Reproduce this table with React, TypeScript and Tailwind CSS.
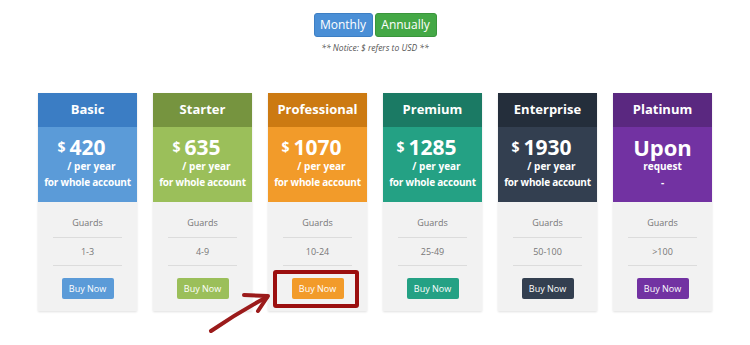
import React from "react";

const plans = [
  { name: "Basic", head: "bg-[#3b7dc4]", body: "bg-[#5b9bd8]", price: "420", range: "1-3" },
  { name: "Starter", head: "bg-[#76943f]", body: "bg-[#9bbf5a]", price: "635", range: "4-9" },
  { name: "Professional", head: "bg-[#cc7a12]", body: "bg-[#f29b2a]", price: "1070", range: "10-24" },
  { name: "Premium", head: "bg-[#1b7a64]", body: "bg-[#24a184]", price: "1285", range: "25-49" },
  { name: "Enterprise", head: "bg-[#242e3b]", body: "bg-[#333f50]", price: "1930", range: "50-100" },
  { name: "Platinum", head: "bg-[#5a2880]", body: "bg-[#7232a2]", price: null, range: ">100" },
];

function Card({ plan }: { plan: (typeof plans)[number] }) {
  return (
    <div className="w-[99px] bg-[#f2f2f2] shadow-[0_1px_2px_rgba(0,0,0,0.12)] flex flex-col">
      <div className={`${plan.head} h-[34px] flex items-center justify-center text-white text-[13px] font-bold`}>
        {plan.name}
      </div>
      <div className={`${plan.body} h-[75px] pt-[8px] flex flex-col items-center text-white font-bold`}>
        {plan.price ? (
          <>
            <div className="h-[25px] flex items-center pr-3 leading-[20px]">
              <span className="text-[14px] mr-[4px]">$</span>
              <span className="text-[21px]">{plan.price}</span>
            </div>
            <div className="text-[10px] leading-[12px] pl-2">/ per year</div>
            <div className="text-[10px] leading-[12px] mt-[4px] tracking-[-0.2px]">for whole account</div>
          </>
        ) : (
          <>
            <div className="h-[25px] flex items-center text-[22px] leading-[20px]">Upon</div>
            <div className="text-[10px] leading-[12px]">request</div>
            <div className="text-[10px] leading-[12px] mt-[4px]">-</div>
          </>
        )}
      </div>
      <div className="pt-[14px] pb-[12px] flex flex-col items-center text-[#777] text-[9px]">
        <div className="w-[69px] leading-[14px] pb-[7px] text-center border-b border-[#dcdcdc]">Guards</div>
        <div className="w-[69px] leading-[14px] pt-[7px] pb-[6px] text-center border-b border-[#dcdcdc]">{plan.range}</div>
        <button className={`${plan.body} mt-[12px] w-[52px] h-[21px] rounded-[2px] text-white text-[9px] flex items-center justify-center`}>
          Buy Now
        </button>
      </div>
    </div>
  );
}

export default function App() {
  return (
    <div className="relative w-[750px] h-[345px] bg-white overflow-hidden" style={{ fontFamily: '"Open Sans", "Liberation Sans", sans-serif' }}>
      <div className="pt-[13px] flex justify-center gap-[2px]">
        <button className="w-[59px] h-[24px] rounded-[3px] bg-[#4a8fd6] border border-[#3d7fc4] text-white text-[12px]">Monthly</button>
        <button className="w-[62px] h-[24px] rounded-[3px] bg-[#44a846] border border-[#3a953c] text-white text-[12px]">Annually</button>
      </div>
      <div className="mt-[5px] text-center text-[8.5px] italic text-[#555]">** Notice: $ refers to USD **</div>

      <div className="mt-[38px] flex justify-center gap-[16px]">
        {plans.map((p) => (
          <Card key={p.name} plan={p} />
        ))}
      </div>

      {/* highlight annotation */}
      <div className="absolute left-[273px] top-[270px] w-[86px] h-[38px] border-[4px] border-[#9b0f0f] rounded-[3px]" />
      <svg className="absolute left-0 top-0" width="750" height="345" viewBox="0 0 750 345">
        <path d="M211 331 C 230 318, 250 306, 267 297" fill="none" stroke="#9b1b1b" strokeWidth="4" strokeLinecap="round" />
        <path d="M244 295 L268 296 L258 311" fill="none" stroke="#9b1b1b" strokeWidth="4" strokeLinecap="round" strokeLinejoin="round" />
      </svg>
    </div>
  );
}
